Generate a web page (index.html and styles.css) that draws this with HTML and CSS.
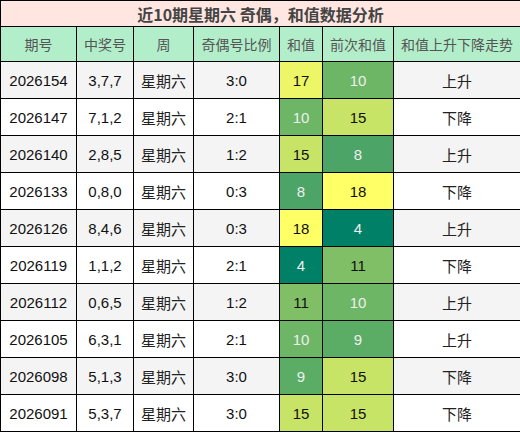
FILE: index.html
```html
<!DOCTYPE html>
<html lang="zh">
<head>
    <meta charset="UTF-8">
    <title>近10期星期六 奇偶，和值数据分析</title>
    <link rel="stylesheet" href="styles.css">
</head>
<body>
    <table class="stats">
        <colgroup>
            <col class="c-issue">
            <col class="c-nums">
            <col class="c-week">
            <col class="c-ratio">
            <col class="c-sum">
            <col class="c-prev">
            <col class="c-trend">
        </colgroup>
        <tr class="title-row">
            <th colspan="7">近10期星期六 奇偶，和值数据分析</th>
        </tr>
        <tr class="head-row">
            <th>期号</th>
            <th>中奖号</th>
            <th>周</th>
            <th>奇偶号比例</th>
            <th>和值</th>
            <th>前次和值</th>
            <th>和值上升下降走势</th>
        </tr>
        <tr>
            <td>2026154</td><td>3,7,7</td><td class="cn">星期六</td><td>3:0</td>
            <td class="v17">17</td><td class="v10">10</td><td class="cn">上升</td>
        </tr>
        <tr>
            <td>2026147</td><td>7,1,2</td><td class="cn">星期六</td><td>2:1</td>
            <td class="v10">10</td><td class="v15">15</td><td class="cn">下降</td>
        </tr>
        <tr>
            <td>2026140</td><td>2,8,5</td><td class="cn">星期六</td><td>1:2</td>
            <td class="v15">15</td><td class="v8">8</td><td class="cn">上升</td>
        </tr>
        <tr>
            <td>2026133</td><td>0,8,0</td><td class="cn">星期六</td><td>0:3</td>
            <td class="v8">8</td><td class="v18">18</td><td class="cn">下降</td>
        </tr>
        <tr>
            <td>2026126</td><td>8,4,6</td><td class="cn">星期六</td><td>0:3</td>
            <td class="v18">18</td><td class="v4">4</td><td class="cn">上升</td>
        </tr>
        <tr>
            <td>2026119</td><td>1,1,2</td><td class="cn">星期六</td><td>2:1</td>
            <td class="v4">4</td><td class="v11">11</td><td class="cn">下降</td>
        </tr>
        <tr>
            <td>2026112</td><td>0,6,5</td><td class="cn">星期六</td><td>1:2</td>
            <td class="v11">11</td><td class="v10">10</td><td class="cn">上升</td>
        </tr>
        <tr>
            <td>2026105</td><td>6,3,1</td><td class="cn">星期六</td><td>2:1</td>
            <td class="v10">10</td><td class="v9">9</td><td class="cn">上升</td>
        </tr>
        <tr>
            <td>2026098</td><td>5,1,3</td><td class="cn">星期六</td><td>3:0</td>
            <td class="v9">9</td><td class="v15">15</td><td class="cn">下降</td>
        </tr>
        <tr>
            <td>2026091</td><td>5,3,7</td><td class="cn">星期六</td><td>3:0</td>
            <td class="v15">15</td><td class="v15">15</td><td class="cn">下降</td>
        </tr>
    </table>
</body>
</html>
```

FILE: styles.css
```css
body {
    margin: 0;
    padding: 0;
    background: #fff;
    font-family: 'Liberation Sans', 'Noto Sans CJK SC', sans-serif;
}

.stats {
    border-collapse: collapse;
    table-layout: fixed;
    width: 520px;
}

.c-issue { width: 76px; }
.c-nums  { width: 57px; }
.c-week  { width: 60px; }
.c-ratio { width: 86px; }
.c-sum   { width: 43px; }
.c-prev  { width: 71px; }
.c-trend { width: 127px; }

.stats th,
.stats td {
    border: 1px solid #000;
    padding: 0;
    text-align: center;
    white-space: nowrap;
    overflow: hidden;
}

.title-row th {
    height: 25px;
    background-color: #ffe6e1;
    color: #444;
    font-size: 16px;
    font-weight: bold;
    font-family: 'Noto Sans CJK SC', sans-serif;
}

.head-row th {
    height: 34px;
    background-color: #b3eecb;
    color: #555;
    font-size: 14px;
    font-weight: normal;
    font-family: 'Noto Sans CJK SC', sans-serif;
}

.stats tr:nth-child(odd) {
    background-color: #f4f4f4;
}

.stats tr:nth-child(even) {
    background-color: #fff;
}

.stats td {
    height: 36px;
    font-size: 15px;
    color: #111;
}

.stats td.cn {
    font-family: 'Noto Sans CJK SC', sans-serif;
    color: #222;
}

/* sum colour scale, low = dark green, high = yellow */
.stats td.v4  { background-color: #008066; color: #eee; }
.stats td.v8  { background-color: #4ca466; color: #eee; }
.stats td.v9  { background-color: #5bad66; color: #eee; }
.stats td.v10 { background-color: #6db666; color: #eee; }
.stats td.v11 { background-color: #80bf66; }
.stats td.v15 { background-color: #c8e466; }
.stats td.v17 { background-color: #edf666; }
.stats td.v18 { background-color: #ffff66; }
```
